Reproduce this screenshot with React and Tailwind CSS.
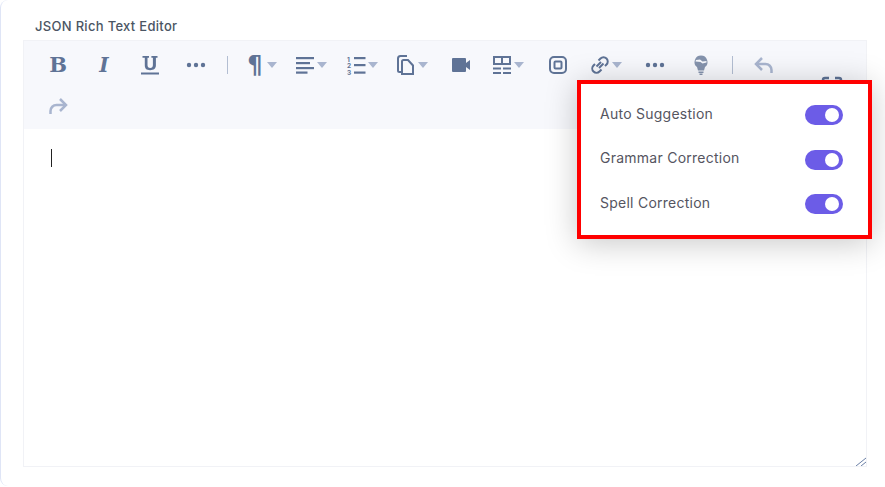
const Caret = () => (
  <svg viewBox="0 0 10 6" className="w-[10px] h-[6px] shrink-0 fill-[#a9b5cf]">
    <path d="M0 0h10L5 6z" />
  </svg>
);

const Icon = ({ children, className = 'fill-[#5f7396]' }) => (
  <svg viewBox="0 0 24 24" className={`w-6 h-6 shrink-0 ${className}`}>
    {children}
  </svg>
);

const Glyph = ({ className, children }) => (
  <span className={`w-6 h-6 flex items-center justify-center text-[#5f7396] shrink-0 ${className}`}>
    {children}
  </span>
);

const Dots = () => (
  <Icon>
    <circle cx="5" cy="12" r="2.2" />
    <circle cx="12" cy="12" r="2.2" />
    <circle cx="19" cy="12" r="2.2" />
  </Icon>
);

const Btn = ({ w = 'w-[46px]', caret, children }) => (
  <div className={`${w} h-[41px] flex items-center ${caret ? 'pl-[7px]' : 'justify-center'}`}>
    {children}
    {caret && <Caret />}
  </div>
);

const Sep = () => (
  <div className="w-[17px] h-[41px] flex items-center justify-center">
    <div className="w-px h-[18px] bg-[#b3bed2]" />
  </div>
);

const Toggle = () => (
  <button className="w-[38px] h-5 rounded-full bg-[#6c5ce7] flex items-center justify-end pr-1">
    <span className="w-[14px] h-[14px] rounded-full bg-white" />
  </button>
);

const settings = ['Auto Suggestion', 'Grammar Correction', 'Spell Correction'];

export default function App() {
  return (
    <div className="relative w-[885px] h-[487px] overflow-hidden bg-white font-['Inter',sans-serif]">
      <div className="w-[900px] h-[486px] border-l border-[#dfe5f6] rounded-l-lg pl-[22px] pt-[18px]">
        <div className="pl-3 h-4 mb-[6px] text-[13px] tracking-[0.3px] leading-4 font-medium text-[#4b5563]">JSON Rich Text Editor</div>

        {/* Editor */}
        <div className="relative w-[844px] h-[427px] border border-[#f1f2f6]">
          <div className="flex bg-[#f7f8fc] h-[88px] pl-[11px] pt-px items-center">
            <div className="flex flex-wrap w-[760px]">
              <Btn><Glyph className="font-['DejaVu_Serif',serif] font-bold text-[21px]">B</Glyph></Btn>
              <Btn><Glyph className="font-['DejaVu_Serif',serif] italic font-bold text-[20px]">I</Glyph></Btn>
              <Btn>
                <Icon>
                  <path d="M4.500 3h6.500v1.800H9.500v7.200c0 2 1 3 2.700 3s2.700-1 2.700-3V4.800h-1.500V3h6.100v1.800h-1.600v7.500c0 3.200-2 4.900-5.800 4.900s-5.300-1.700-5.300-4.900V4.800H4.500z" />
                  <rect x="3" y="19.500" width="18" height="2" />
                </Icon>
              </Btn>
              <Btn><Dots /></Btn>
              <Sep />
              <Btn w="w-[50px]" caret><Glyph className="font-['DejaVu_Sans',sans-serif] font-bold text-[24px]">¶</Glyph></Btn>
              <Btn w="w-[51px]" caret>
                <Icon>
                  <rect x="3" y="4" width="18" height="2.200" />
                  <rect x="3" y="9" width="14" height="2.200" />
                  <rect x="3" y="14" width="18" height="2.200" />
                  <rect x="3" y="18.500" width="11.500" height="2.200" />
                </Icon>
              </Btn>
              <Btn w="w-[50px]" caret>
                <Icon>
                  <text x="3" y="8.500" fontSize="6.500" fontWeight="700" fontFamily="Inter">1</text>
                  <text x="3" y="15" fontSize="6.500" fontWeight="700" fontFamily="Inter">2</text>
                  <text x="3" y="21.500" fontSize="6.500" fontWeight="700" fontFamily="Inter">3</text>
                  <rect x="10" y="4" width="11.500" height="2.200" />
                  <rect x="10" y="11" width="11.500" height="2.200" />
                  <rect x="10" y="18.500" width="11.500" height="2.200" />
                </Icon>
              </Btn>
              <Btn w="w-[50px]" caret>
                <Icon className="fill-none stroke-[#5f7396] stroke-2">
                  <path d="M7 19H5.500A1.500 1.500 0 0 1 4 17.500V5.500A2.500 2.500 0 0 1 6.500 3H13" />
                  <path d="M8 21V8.500A1.500 1.500 0 0 1 9.500 7H14l5 5.500V21z" />
                </Icon>
              </Btn>
              <Btn>
                <Icon>
                  <rect x="4" y="5" width="14" height="14" rx="1" />
                  <path d="M18 10l4-3v10l-4-3z" />
                </Icon>
              </Btn>
              <Btn w="w-[52px]" caret>
                <Icon>
                  <path fillRule="evenodd" d="M3 3h18v9H3zM5 5v5h6V5zm8 0v5h6V5z" />
                  <rect x="3" y="14.500" width="8" height="2" />
                  <rect x="13" y="14.500" width="8" height="2" />
                  <rect x="3" y="19" width="8" height="2" />
                  <rect x="13" y="19" width="8" height="2" />
                </Icon>
              </Btn>
              <Btn>
                <Icon className="fill-none stroke-[#5f7396] stroke-2">
                  <rect x="4" y="4" width="16" height="16" rx="4" />
                  <rect x="8.500" y="8.500" width="7" height="7" rx="1" />
                </Icon>
              </Btn>
              <Btn w="w-[51px]" caret>
                <Icon className="fill-none stroke-[#5f7396] stroke-2">
                  <path d="M10.500 7.500L12.500 5.500a4 4 0 0 1 6 6L17 13" />
                  <path d="M13.500 16.500L11.500 18.500a4 4 0 0 1-6-6L7 11" />
                  <path d="M8.500 13.500L13 9" />
                  <path d="M11 15l4.500-4.500" />
                </Icon>
              </Btn>
              <Btn><Dots /></Btn>
              <Btn>
                <Icon className="fill-[#8593ad]">
                  <path fillRule="evenodd" d="M12 2.500a6.500 6.500 0 0 1 4 11.600l-1 3.400H9l-1-3.400A6.500 6.500 0 0 1 12 2.500zM6.500 8.500l5 .5 2 1.500 4-1V8l-4 .5L11 6.500l-4 .5z" />
                  <rect x="9.500" y="18.500" width="5" height="1.500" />
                  <rect x="10.500" y="20.500" width="3" height="1.500" />
                </Icon>
              </Btn>
              <Sep />
              <Btn>
                <Icon className="fill-none stroke-[#a9b5cf] stroke-[2.500]">
                  <path d="M10 5l-6 6 6 6" />
                  <path d="M4 11h9.500a6 6 0 0 1 6 6v3" />
                </Icon>
              </Btn>
              <Btn>
                <Icon className="fill-none stroke-[#a9b5cf] stroke-[2.500]">
                  <path d="M14 5l6 6-6 6" />
                  <path d="M20 11h-9.500a6 6 0 0 0-6 6v3" />
                </Icon>
              </Btn>
            </div>
            <div className="w-[46px] ml-[14px] flex justify-center">
              <Icon className="fill-none stroke-[#5f7396] stroke-[2.500]">
                <path d="M3 9V6a2 2 0 0 1 2-2h4M15 4h4a2 2 0 0 1 2 2v3M3 15v3a2 2 0 0 0 2 2h4M15 20h4a2 2 0 0 0 2-2v-3" />
              </Icon>
            </div>
          </div>

          <div className="pl-[27px] pt-5">
            <div className="w-px h-[18px] bg-[#222]" />
          </div>

          <svg viewBox="0 0 10 9" className="absolute right-0 bottom-0 w-[10px] h-[9px] fill-none stroke-[#6a7fa5]">
            <path d="M0 9l10-8M5 9l5-4" />
          </svg>
        </div>
      </div>

      {/* Settings popup */}
      <div className="absolute left-[577px] top-[80px] w-[295px] h-[159px] border-4 border-[#ff0000] bg-white shadow-[0_4px_30px_rgba(0,0,0,0.22)] flex flex-col justify-center gap-[24.5px] pl-[19px] pr-[25px]">
        {settings.map((label) => (
          <div key={label} className="flex items-center justify-between h-5">
            <span className="mb-1 text-[14px] tracking-[0.25px] text-[#55555f]">{label}</span>
            <Toggle />
          </div>
        ))}
      </div>
    </div>
  );
}
